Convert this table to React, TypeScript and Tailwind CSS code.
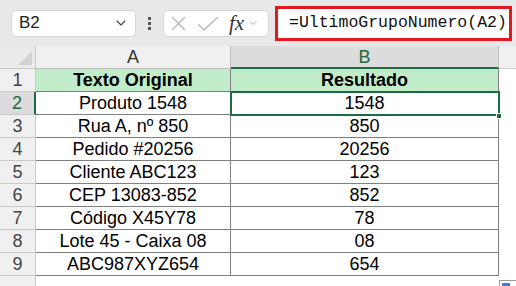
import { ChevronDown } from 'lucide-react';

const rows = [
  { a: 'Produto 1548', b: '1548' },
  { a: 'Rua A, nº 850', b: '850' },
  { a: 'Pedido #20256', b: '20256' },
  { a: 'Cliente ABC123', b: '123' },
  { a: 'CEP 13083-852', b: '852' },
  { a: 'Código X45Y78', b: '78' },
  { a: 'Lote 45 - Caixa 08', b: '08' },
  { a: 'ABC987XYZ654', b: '654' },
];

export default function App() {
  return (
    <div className="w-[516px] h-[286px] overflow-hidden bg-white font-['Liberation_Sans',Arial,sans-serif] text-black">
      {/* Formula bar */}
      <div className="h-[46px] bg-[#e8e8ea] flex items-center pl-[11px]">
        <div className="w-[125px] h-[27px] bg-white rounded-[5px] border border-[#d6d6d8] flex items-center justify-between pl-[7px] pr-[6px]">
          <span className="text-[17px] text-[#222]">B2</span>
          <ChevronDown size={16} strokeWidth={1.6} className="text-[#444]" />
        </div>
        <div className="w-[27px] flex flex-col items-center gap-[2px]">
          <span className="w-[3px] h-[3px] bg-[#555]" />
          <span className="w-[3px] h-[3px] bg-[#555]" />
          <span className="w-[3px] h-[3px] bg-[#555]" />
        </div>
        <div className="w-[106px] h-[27px] bg-white rounded-[5px] border border-[#d6d6d8] flex items-center pl-[6px]">
          <svg width="15" height="15" viewBox="0 0 15 15" className="ml-[1px]">
            <path d="M1 1 L14 14 M14 1 L1 14" stroke="#b5b5b5" strokeWidth="1.3" fill="none" />
          </svg>
          <svg width="22" height="15" viewBox="0 0 22 15" className="ml-[11px]">
            <path d="M1 8 L7 14 L21 1" stroke="#b5b5b5" strokeWidth="1.3" fill="none" />
          </svg>
          <span className="ml-[10px] text-[21px] italic font-['Liberation_Serif',serif] text-[#333] leading-none">fx</span>
          <ChevronDown size={12} strokeWidth={1.4} className="ml-[3px] text-[#888]" />
        </div>
        <div className="ml-[6px] w-[237px] h-[35px] border-[3px] border-[#e3191f] bg-white flex items-center pl-[11px]">
          <span className="font-['Liberation_Mono',monospace] text-[16.5px] text-[#111] whitespace-nowrap">
            =UltimoGrupoNumero(A2)
          </span>
        </div>
      </div>

      {/* Grid */}
      <div className="relative grid grid-cols-[36px_195px_268px_17px] auto-rows-[23px] text-[18px] leading-none">
        {/* column headers */}
        <div className="bg-[#ebebeb] border-r border-b border-[#c8c8c8] relative">
          <div className="absolute right-[3px] bottom-[3px] w-0 h-0 border-l-[14px] border-l-transparent border-b-[14px] border-b-[#d3d3d3]" />
        </div>
        <div className="bg-[#f0f0f0] border-r border-b border-[#bdbdbd] flex items-center justify-center text-[#333]">A</div>
        <div className="bg-[#dcdcdc] border-r border-[#bdbdbd] border-b-2 border-b-[#1e6b41] flex items-center justify-center text-[#1e6b41]">B</div>
        <div className="bg-[#f0f0f0] border-b border-[#d0d0d0]" />

        {/* row 1 */}
        <div className="bg-[#f0f0f0] border-r border-b border-[#c8c8c8] flex items-center justify-center text-[#444]">1</div>
        <div className="bg-[#c1ecc9] border-r border-b border-[#7f7f7f] flex items-center justify-center font-bold">Texto Original</div>
        <div className="bg-[#c1ecc9] border-r border-b border-[#7f7f7f] flex items-center justify-center font-bold">Resultado</div>
        <div />

        {rows.map((r, i) => (
          <div key={i} className="contents">
            <div
              className={`border-b border-[#c8c8c8] flex items-center justify-center ${
                i === 0
                  ? 'bg-[#dcdcdc] border-r-2 border-r-[#1e6b41] text-[#1e6b41]'
                  : 'bg-[#f0f0f0] border-r text-[#444]'
              }`}
            >
              {i + 2}
            </div>
            <div className="border-r border-b border-[#7f7f7f] flex items-center justify-center">{r.a}</div>
            <div className="border-r border-b border-[#7f7f7f] flex items-center justify-center">{r.b}</div>
            <div />
          </div>
        ))}

        {/* row 10 */}
        <div className="bg-[#f0f0f0] border-r border-[#c8c8c8] flex items-start justify-center pt-[8px] text-[#444]">10</div>
        <div />
        <div />
        <div />

        {/* selection B2 */}
        <div className="absolute left-[230px] top-[45px] w-[270px] h-[25px] border-2 border-[#1e6b41] pointer-events-none" />
        <div className="absolute left-[496px] top-[67px] w-[6px] h-[6px] bg-[#1e6b41] border border-white" />

        {/* sheet corner marker */}
        <div className="absolute left-[499px] top-[234px] w-[17px] h-[10px] border-l border-t border-[#9a9a9a] bg-white">
          <div className="mt-[2px] ml-[2px] w-[8px] h-[8px] bg-[#3b7de0]" />
        </div>
      </div>
    </div>
  );
}
